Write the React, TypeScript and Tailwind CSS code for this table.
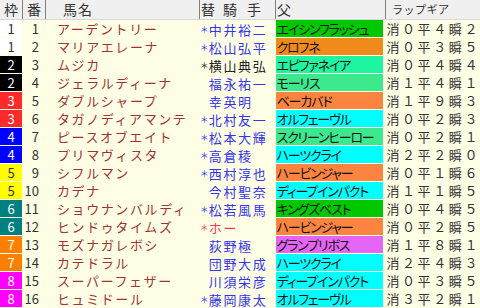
const rows: [number, number, string, string, string, string, string, string, string][] = [
  [1, 1, "アーデントリー", "＊", "中井裕二", "#3333f0", "エイシンフラッシュ", "#00c800", "消０平４瞬２"],
  [1, 2, "マリアエレーナ", "＊", "松山弘平", "#3333f0", "クロフネ", "#f08a1a", "消０平３瞬５"],
  [2, 3, "ムジカ", "＊", "横山典弘", "#222222", "エピファネイア", "#1ef5a0", "消０平４瞬４"],
  [2, 4, "ジェラルディーナ", "", "福永祐一", "#3333f0", "モーリス", "#3ce88c", "消１平４瞬１"],
  [3, 5, "ダブルシャープ", "", "幸英明", "#3333f0", "ベーカバド", "#fb8440", "消１平９瞬３"],
  [3, 6, "タガノディアマンテ", "＊", "北村友一", "#3333f0", "オルフェーヴル", "#00ffff", "消０平２瞬３"],
  [4, 7, "ピースオブエイト", "＊", "松本大輝", "#3333f0", "スクリーンヒーロー", "#3ce88c", "消０平２瞬１"],
  [4, 8, "プリマヴィスタ", "＊", "高倉稜", "#3333f0", "ハーツクライ", "#00ffff", "消２平２瞬０"],
  [5, 9, "シフルマン", "＊", "西村淳也", "#3333f0", "ハービンジャー", "#fb8440", "消０平１瞬６"],
  [5, 10, "カデナ", "", "今村聖奈", "#3333f0", "ディープインパクト", "#00ffff", "消１平１瞬５"],
  [6, 11, "ショウナンバルディ", "＊", "松若風馬", "#3333f0", "キングズベスト", "#00c800", "消０平４瞬５"],
  [6, 12, "ヒンドゥタイムズ", "＊", "ホー", "#ff3355", "ハービンジャー", "#fb8440", "消０平２瞬５"],
  [7, 13, "モズナガレボシ", "", "荻野極", "#3333f0", "グランプリボス", "#e464f4", "消１平８瞬１"],
  [7, 14, "カテドラル", "", "団野大成", "#3333f0", "ハーツクライ", "#00ffff", "消２平４瞬３"],
  [8, 15, "スーパーフェザー", "", "川須栄彦", "#3333f0", "ディープインパクト", "#00ffff", "消０平３瞬５"],
  [8, 16, "ヒュミドール", "＊", "藤岡康太", "#3333f0", "オルフェーヴル", "#00ffff", "消３平２瞬１"],
]

const frameStyle: Record<number, string> = {
  1: "bg-white text-[#333]",
  2: "bg-black text-white",
  3: "bg-[#ff2a2a] text-white",
  4: "bg-[#0000ff] text-white",
  5: "bg-[#ffff00] text-[#333]",
  6: "bg-[#008080] text-white",
  7: "bg-[#ff8000] text-white",
  8: "bg-[#ff00ff] text-white",
}

function Sep() {
  return <div className="w-px h-full bg-[#808080] shrink-0" />
}

export default function App() {
  return (
    <div
      className="w-[480px] h-[308px] overflow-hidden bg-[#ffffe6] text-[13px]"
      style={{ fontFamily: '"Noto Sans CJK JP", "Noto Sans", sans-serif' }}
    >
      {/* header */}
      <div className="flex h-[20px] bg-[#f0f0f0] border-b border-[#d8d8d8] text-[#333] text-[14px] leading-[19px]">
        <div className="w-[22px] text-center">枠</div>
        <Sep />
        <div className="w-[22px] text-center">番</div>
        <Sep />
        <div className="w-[153px] pl-[17px] tracking-[1px]">馬名</div>
        <Sep />
        <div className="w-[75px] pl-[1px] flex">
          <span>替</span>
          <span className="ml-[8px] tracking-[10px]">騎手</span>
        </div>
        <Sep />
        <div className="w-[109px] pl-[1px]">父</div>
        <Sep />
        <div className="flex-1 pl-[6px] text-[11px] tracking-[0.5px]">ラップギア</div>
      </div>

      {/* body */}
      {rows.map(([frame, num, name, mark, jockey, jc, sire, sc, lap]) => (
        <div key={num} className="flex h-[18px] leading-[17px]">
          <div className={`w-[22px] h-[17px] text-center ${frameStyle[frame]}`}>{frame}</div>
          <div className="w-[23px] pr-[6px] text-right text-[#333]">{num}</div>
          <div className="w-[154px] pl-[12px] tracking-[1.6px] text-[#a03232] whitespace-nowrap">{name}</div>
          <div className="w-[76px] pl-[1px] flex items-center whitespace-nowrap" style={{ color: jc }}>
            <span className="w-[9px] text-[9px] leading-[17px]">{mark}</span>
            <span className="tracking-[1.7px]">{jockey}</span>
          </div>
          <div
            className="w-[108px] h-[17px] mx-px pl-[1px] text-[#111] tracking-[-1.2px] whitespace-nowrap overflow-hidden"
            style={{ backgroundColor: sc, fontFeatureSettings: '"palt"' }}
          >
            {sire}
          </div>
          <div className="flex-1 pl-[2px] tracking-[2.6px] text-[#333] whitespace-nowrap">{lap}</div>
        </div>
      ))}
    </div>
  )
}
